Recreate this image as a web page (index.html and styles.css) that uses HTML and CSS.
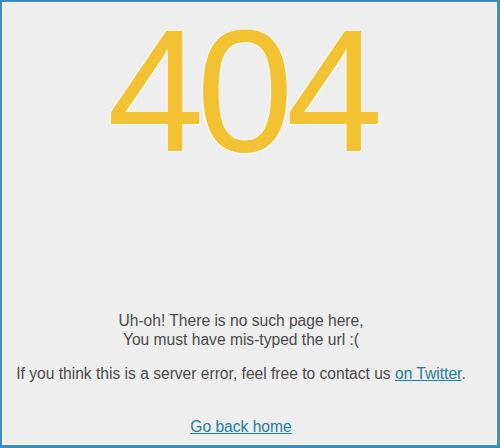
FILE: index.html
```html
<!DOCTYPE html>
<html lang="en">
<head>
  <meta charset="UTF-8">
  <meta name="viewport" content="width=device-width, initial-scale=1.0">
  <title>404 - Page not found</title>
  <link rel="stylesheet" href="styles.css">
</head>
<body>
  <div class="frame">
    <h1 class="code">404</h1>
    <p class="message">Uh-oh! There is no such page here,<br>You must have mis-typed the url :(</p>
    <p class="contact">If you think this is a server error, feel free to contact us <a href="#">on Twitter</a>.</p>
    <p class="home"><a href="#">Go back home</a></p>
  </div>
</body>
</html>
```

FILE: styles.css
```css
html, body {
  margin: 0;
  padding: 0;
}
body {
  font-family: "Liberation Sans", Arial, sans-serif;
  background: #eeeeee;
}
.frame {
  box-sizing: border-box;
  width: 500px;
  height: 448px;
  border: 2px solid #3a8fc2;
  border-right-width: 3px;
  border-bottom-width: 3px;
  box-shadow: inset 0 0 0 1px #ffffff;
  background: #eeeeee;
  padding: 0 17px 0 0;
  text-align: center;
  color: #4a4a4a;
  font-size: 15.6px;
  line-height: 19px;
}
.code {
  margin: 0;
  font-family: "Liberation Sans", sans-serif;
  font-weight: 400;
  font-size: 175px;
  line-height: 177px;
  letter-spacing: -8px;
  color: #f2c233;
  text-shadow: 1px 1px 0 #ffffff, -1px 0 0 #ffffff;
}
.message {
  margin: 132px 0 0;
}
.contact {
  margin: 15px 0 0;
}
.home {
  margin: 34px 0 0;
}
a {
  color: #237d9c;
}
```
